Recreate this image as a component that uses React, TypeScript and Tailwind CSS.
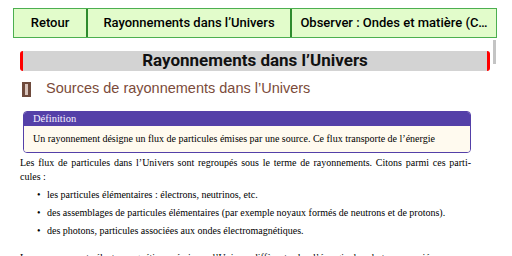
import React from "react";

export default function App() {
  const serif = { fontFamily: '"Liberation Serif", "DejaVu Serif", serif' };
  return (
    <div className="relative w-[512px] h-[256px] overflow-hidden bg-white">
      <div className="pt-[8px] px-[13px] pr-[15px]">
        <div
          className="flex h-[30px] border border-[#4caf50] bg-[#e2fccb] text-[13px] font-medium text-black"
          style={{ fontFamily: "Roboto, sans-serif" }}
        >
          <div className="w-[74px] flex items-center justify-center border-r-2 border-[#2e8b2e]">Retour</div>
          <div className="w-[204px] flex items-center justify-center border-r-2 border-[#2e8b2e]">Rayonnements dans l’Univers</div>
          <div className="flex-1 flex items-center justify-center whitespace-nowrap overflow-hidden">Observer : Ondes et matière (C…</div>
        </div>
      </div>
      <div className="absolute left-[493px] top-[40px] w-[3px] h-[24px] bg-[#c4c4c4]" />
      <div className="px-[20px] pr-[22px] mt-[13px]">
        <div
          className="h-[20px] bg-[#d3d3d3] border-l-[3px] border-r-[3px] border-[#ff0000] rounded-[3px] flex items-center justify-center text-[17px] font-bold text-[#111]"
          style={{ fontFamily: "Roboto, sans-serif" }}
        >
          Rayonnements dans l’Univers
        </div>
      </div>
      <div className="flex items-center mt-[9px] ml-[22px] h-[18px]">
        <div className="w-[9px] h-[15px] bg-[#6e4a3c] flex items-center justify-center">
          <div className="w-[3px] h-[11px] bg-[#d8c4bc]" />
        </div>
        <div
          className="ml-[15px] text-[14.5px] text-[#7b4b3a]"
          style={{ fontFamily: '"Liberation Sans", Arial, sans-serif' }}
        >
          Sources de rayonnements dans l’Univers
        </div>
      </div>
      <div className="mx-[23px] w-[448px] mt-[13px] rounded-[4px] border border-[#5440a8] overflow-hidden" style={serif}>
        <div className="h-[14px] bg-[#5440a8] text-[#f4f0ff] text-[10.5px] leading-[14px] pl-[9px]">Définition</div>
        <div className="bg-[#fffaef] h-[26px] text-[10px] leading-[26px] pl-[9px] text-black">
          Un rayonnement désigne un flux de particules émises par une source. Ce flux transporte de l’énergie
        </div>
      </div>
      <div className="ml-[20px] w-[451px] mt-[3px] text-[10px] leading-[14px] text-black" style={serif}>
        <p className="text-justify [text-align-last:justify]">
          Les flux de particules dans l’Univers sont regroupés sous le terme de rayonnements. Citons parmi ces parti-
        </p>
        <p>cules :</p>
        <ul className="mt-[4px] ml-[17px] flex flex-col gap-[4px]">
          <li className="flex leading-[14px]"><span className="w-[10px]">•</span>les particules élémentaires : électrons, neutrinos, etc.</li>
          <li className="flex leading-[14px]"><span className="w-[10px]">•</span>des assemblages de particules élémentaires (par exemple noyaux formés de neutrons et de protons).</li>
          <li className="flex leading-[14px]"><span className="w-[10px]">•</span>des photons, particules associées aux ondes électromagnétiques.</li>
        </ul>
        <p className="mt-[13px]">Les rayonnements électromagnétiques émis par l’Univers diffèrent selon l’énergie des photons associés</p>
      </div>
    </div>
  );
}
